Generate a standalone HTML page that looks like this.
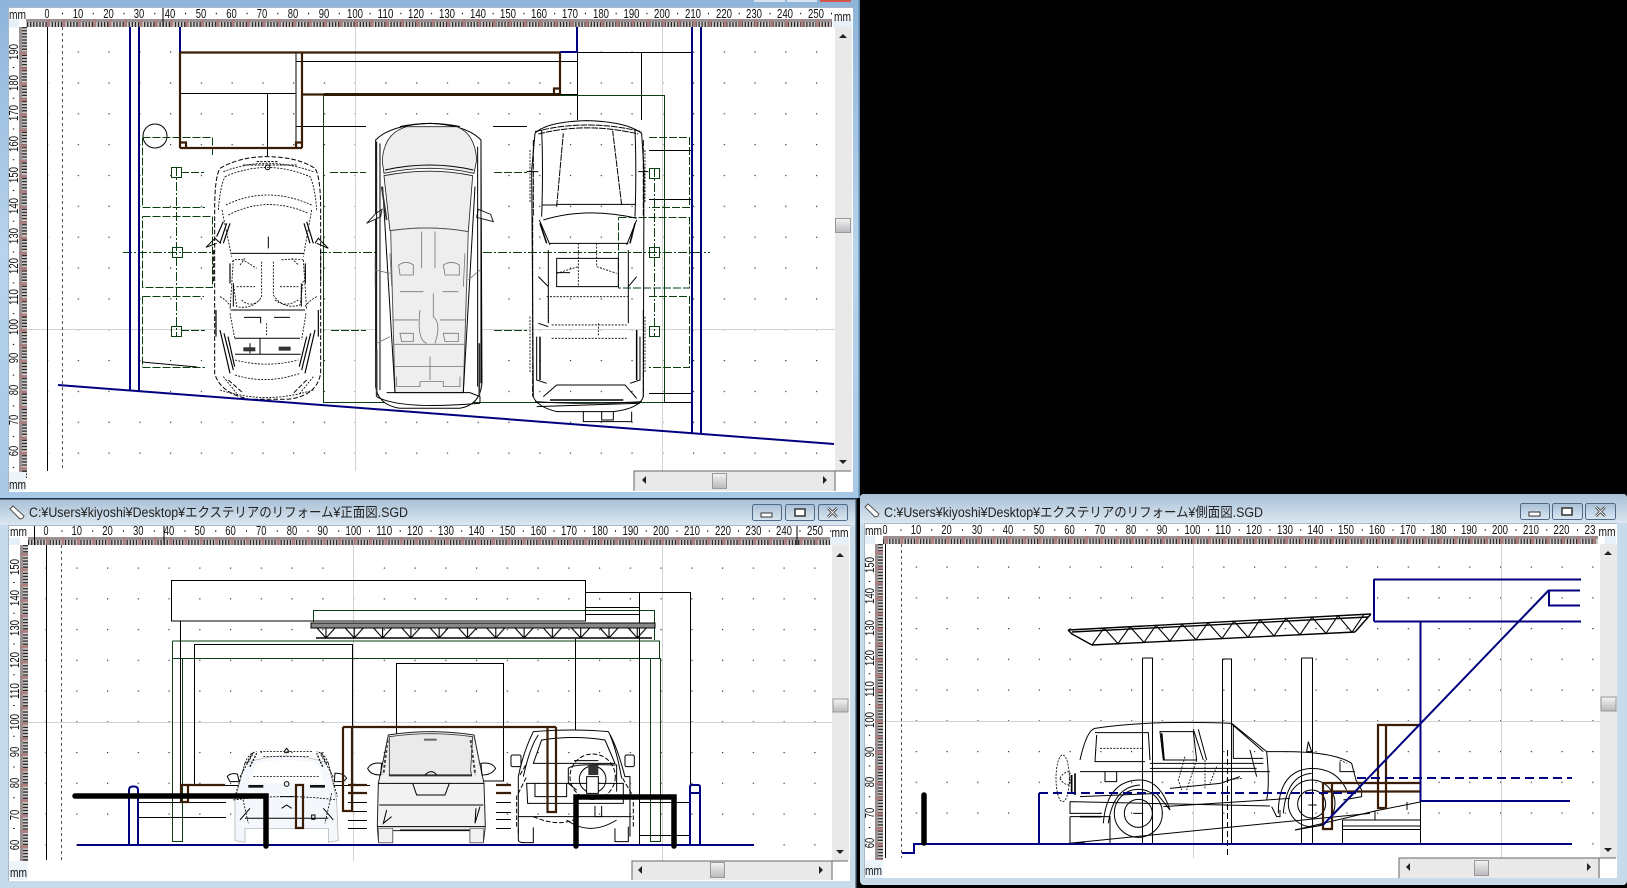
<!DOCTYPE html>
<html lang="ja"><head><meta charset="utf-8"><title>SGD</title>
<style>
html,body{margin:0;padding:0;background:#000;width:1627px;height:888px;overflow:hidden}
svg{display:block;position:absolute;left:0;top:0}
text{font-family:"Liberation Sans","Noto Sans CJK JP",sans-serif;fill:#111}
.r text{font-size:12.5px;text-anchor:middle}
.k{stroke:#000;fill:none;stroke-width:1}
.g{stroke:#0a3f12;fill:none;stroke-width:1}
.gd{stroke:#0a3f12;fill:none;stroke-width:1;stroke-dasharray:8 2}
.gdd{stroke:#0a3f12;fill:none;stroke-width:1;stroke-dasharray:9 2 2 2}
.n{stroke:#00007f;fill:none;stroke-width:2}
.b{stroke:#3b1d06;fill:none;stroke-width:2.2}
.c{stroke:#d2d2d2;fill:none;stroke-width:1}
.cr{stroke:#000;fill:none;stroke-width:3}
.cd{stroke:#000;fill:none;stroke-width:3;stroke-dasharray:14 6}
.cf{stroke:#000;fill:none;stroke-width:2.5;stroke-dasharray:6 4}
.cg{stroke:#777;fill:none;stroke-width:2.5}
.sb{fill:#e9e9e9}
</style></head><body>
<svg width="1627" height="888" viewBox="0 0 1627 888" xmlns="http://www.w3.org/2000/svg">
<defs>
<linearGradient id="tb" x1="0" y1="0" x2="0" y2="1"><stop offset="0" stop-color="#a9c0d6"/><stop offset="1" stop-color="#dbe7f1"/></linearGradient>
<linearGradient id="th" x1="0" y1="0" x2="0" y2="1"><stop offset="0" stop-color="#f4f4f4"/><stop offset="1" stop-color="#b9b9bd"/></linearGradient>
<linearGradient id="fl" x1="0" y1="0" x2="0" y2="1"><stop offset="0" stop-color="#8fb4da"/><stop offset=".5" stop-color="#b8d3ec"/><stop offset="1" stop-color="#a7c8e6"/></linearGradient>
<pattern id="d1" x="47" y="51.5" width="30.76" height="30.85" patternUnits="userSpaceOnUse"><rect width="1.2" height="1.2" fill="#333"/></pattern>
<pattern id="d2" x="45.5" y="567.5" width="30.75" height="30.75" patternUnits="userSpaceOnUse"><rect width="1.2" height="1.2" fill="#333"/></pattern>
<pattern id="d3" x="885" y="566.5" width="30.75" height="30.75" patternUnits="userSpaceOnUse"><rect width="1.2" height="1.2" fill="#333"/></pattern>
<pattern id="tr" x="316" y="628" width="28.3" height="10" patternUnits="userSpaceOnUse"><path d="M1 0L10 10M10 0V10M10 10L19 0M19 0H28" stroke="#000" stroke-width="1.1" fill="none"/></pattern>
</defs>

<rect width="1627" height="888" fill="#000"/>

<!-- WINDOW 1 -->
<rect x="0" y="0" width="860" height="498" fill="url(#fl)"/>
<rect x="754" y="0" width="31" height="2" fill="#d5e2ee"/><rect x="787" y="0" width="30" height="2" fill="#d5e2ee"/><rect x="820" y="0" width="31" height="2" fill="#d2564a"/>
<rect x="858.500" y="0" width="1.500" height="498" fill="#5f86ab"/>
<rect x="8" y="7" width="845" height="485" fill="#fff"/>
<rect x="8" y="7" width="845" height="1" fill="#a9b8c6"/><rect x="8" y="7" width="1" height="485" fill="#a9b8c6"/>
<rect x="27" y="27" width="808" height="444" fill="url(#d1)"/>
<path class="c" d="M355.500 27V471M662.500 27V471M27 329.500H835"/>
<!-- ruler W1 -->
<rect x="19" y="19" width="813" height="8" fill="#cfcaca"/><rect x="19" y="19" width="813" height="3" fill="#9a9292"/>
<path d="M27 24.500H832" stroke="#2a2a2a" stroke-width="5" stroke-dasharray="1.3 1.78" fill="none"/>
<path d="M47 23H832" stroke="#ab8080" stroke-width="8" stroke-dasharray="3 12.38" fill="none"/>
<rect x="19" y="27" width="8" height="451" fill="#cfcaca"/><rect x="19" y="27" width="3" height="451" fill="#9a9292"/>
<path d="M24.500 27V478" stroke="#2a2a2a" stroke-width="5" stroke-dasharray="1.3 1.78" fill="none"/>
<path d="M23 52V478" stroke="#ab8080" stroke-width="8" stroke-dasharray="3 12.38" fill="none"/>
<rect x="9" y="8" width="17" height="19" fill="#fff"/><rect x="9" y="19.500" width="10" height="8" fill="#e6f0f8"/>
<rect x="833" y="8" width="19" height="19" fill="#fff"/><rect x="833" y="19.500" width="19" height="8" fill="#e6f0f8"/>
<rect x="9" y="472" width="17" height="19" fill="#eef5fa"/>
<path d="M62 13.500H832M13.500 67V470" stroke="#000" stroke-width="1.400" stroke-dasharray="1 29.760" fill="none"/>
<g class="r">
<text x="17.500" y="19" textLength="17" lengthAdjust="spacingAndGlyphs">mm</text><text x="842.500" y="21" textLength="17" lengthAdjust="spacingAndGlyphs">mm</text><text x="17.500" y="489" textLength="17" lengthAdjust="spacingAndGlyphs">mm</text>
<text x="47" y="18" textLength="5" lengthAdjust="spacingAndGlyphs">0</text><text x="78" y="18" textLength="10.500" lengthAdjust="spacingAndGlyphs">10</text><text x="108.500" y="18" textLength="10.500" lengthAdjust="spacingAndGlyphs">20</text><text x="139" y="18" textLength="10.500" lengthAdjust="spacingAndGlyphs">30</text><text x="170" y="18" textLength="10.500" lengthAdjust="spacingAndGlyphs">40</text><text x="201" y="18" textLength="10.500" lengthAdjust="spacingAndGlyphs">50</text><text x="231.500" y="18" textLength="10.500" lengthAdjust="spacingAndGlyphs">60</text><text x="262" y="18" textLength="10.500" lengthAdjust="spacingAndGlyphs">70</text><text x="293" y="18" textLength="10.500" lengthAdjust="spacingAndGlyphs">80</text><text x="324" y="18" textLength="10.500" lengthAdjust="spacingAndGlyphs">90</text><text x="355" y="18" textLength="16" lengthAdjust="spacingAndGlyphs">100</text><text x="385.500" y="18" textLength="16" lengthAdjust="spacingAndGlyphs">110</text><text x="416" y="18" textLength="16" lengthAdjust="spacingAndGlyphs">120</text><text x="447" y="18" textLength="16" lengthAdjust="spacingAndGlyphs">130</text><text x="478" y="18" textLength="16" lengthAdjust="spacingAndGlyphs">140</text><text x="508" y="18" textLength="16" lengthAdjust="spacingAndGlyphs">150</text><text x="539" y="18" textLength="16" lengthAdjust="spacingAndGlyphs">160</text><text x="570" y="18" textLength="16" lengthAdjust="spacingAndGlyphs">170</text><text x="601" y="18" textLength="16" lengthAdjust="spacingAndGlyphs">180</text><text x="631.500" y="18" textLength="16" lengthAdjust="spacingAndGlyphs">190</text><text x="662" y="18" textLength="16" lengthAdjust="spacingAndGlyphs">200</text><text x="693" y="18" textLength="16" lengthAdjust="spacingAndGlyphs">210</text><text x="724" y="18" textLength="16" lengthAdjust="spacingAndGlyphs">220</text><text x="754" y="18" textLength="16" lengthAdjust="spacingAndGlyphs">230</text><text x="785" y="18" textLength="16" lengthAdjust="spacingAndGlyphs">240</text><text x="816" y="18" textLength="16" lengthAdjust="spacingAndGlyphs">250</text>
<text transform="translate(18 52) rotate(-90)" textLength="16" lengthAdjust="spacingAndGlyphs">190</text><text transform="translate(18 83) rotate(-90)" textLength="16" lengthAdjust="spacingAndGlyphs">180</text><text transform="translate(18 113) rotate(-90)" textLength="16" lengthAdjust="spacingAndGlyphs">170</text><text transform="translate(18 144) rotate(-90)" textLength="16" lengthAdjust="spacingAndGlyphs">160</text><text transform="translate(18 175) rotate(-90)" textLength="16" lengthAdjust="spacingAndGlyphs">150</text><text transform="translate(18 206) rotate(-90)" textLength="16" lengthAdjust="spacingAndGlyphs">140</text><text transform="translate(18 236) rotate(-90)" textLength="16" lengthAdjust="spacingAndGlyphs">130</text><text transform="translate(18 266) rotate(-90)" textLength="16" lengthAdjust="spacingAndGlyphs">120</text><text transform="translate(18 297) rotate(-90)" textLength="16" lengthAdjust="spacingAndGlyphs">110</text><text transform="translate(18 327) rotate(-90)" textLength="16" lengthAdjust="spacingAndGlyphs">100</text><text transform="translate(18 358) rotate(-90)" textLength="10.500" lengthAdjust="spacingAndGlyphs">90</text><text transform="translate(18 390) rotate(-90)" textLength="10.500" lengthAdjust="spacingAndGlyphs">80</text><text transform="translate(18 420) rotate(-90)" textLength="10.500" lengthAdjust="spacingAndGlyphs">70</text><text transform="translate(18 451) rotate(-90)" textLength="10.500" lengthAdjust="spacingAndGlyphs">60</text>
</g>
<path class="k" d="M163 8V27"/>
<!-- W1 scrollbars -->
<rect class="sb" x="835" y="27" width="17" height="444"/>
<path d="M839 38l4-4 4 4zM839 460l4 4 4-4z" fill="#222"/>
<rect x="835.500" y="218.500" width="15" height="14" fill="url(#th)" stroke="#999"/>
<rect class="sb" x="634" y="471" width="201" height="20"/>
<path d="M634 491V471H851M835 471V491" stroke="#666" fill="none"/>
<path d="M646 476v8l-4-4zM823 476v8l4-4z" fill="#222"/>
<rect x="712.500" y="473.500" width="14" height="15" fill="url(#th)" stroke="#999"/>
<!-- W1 drawing -->
<path class="k" d="M47.500 27V471"/>
<path stroke="#555" fill="none" stroke-dasharray="3 3" d="M62.500 27V471"/>
<path class="k" d="M296 53V148M296.500 61.500H577.500M180 93.500H296M267.500 93.500V156M296 126.500H366M577.500 52V120M577 52.500H693M641.500 52V120M560 94.500H577M493 126.500H527M649 150.500H692M649 199.500H692M649 393.500H692M664 402.500H692"/>
<circle class="k" cx="155" cy="136" r="12"/>
<path class="g" d="M323.500 95V402.500H664M323 95.500H664.500V402"/>
<path class="gd" d="M142.500 137.500H212.500V155M142.500 137.500V207.500H205M142.500 216.500H212.500V287.500H142.500V216.500M142.500 296.500H204M142.500 296.500V367M142.500 367.500H205M181 172.500H204M181 330.500H205M330 172.500H366M494 172.500H527M331 330.500H366M494 330.500H527M649 137.500H689.500V207.500H649M618.500 217.500H689.500V288H618.500V217.500M649 296.500H689.500V367.500H649"/>
<path class="gdd" d="M123 252.500H710M176.500 167V336M654.500 168V336"/>
<path class="g" d="M171.500 167.500h10v10h-10zM172.500 247.500h10v10h-10zM171.500 326.500h10v10h-10zM649.500 168.500h10v10h-10zM649.500 247.500h10v10h-10zM649.500 326.500h10v10h-10z"/>
<path class="k" d="M142 362L197 367"/>
<path class="b" d="M180 52.500H560V94M302 52V148M180 148H302M180 52V148M302 94.500H560"/>
<path class="b" d="M180.500 142.500H186V148M296 148V142.500H302M554 94V88.500H560" stroke-width="2"/>
<path d="M324 94.500H560" stroke="#2e1c00" stroke-width="3"/>

<!-- Car 1 top sports -->
<g transform="translate(200 110) scale(.3333)">
<path fill="#fff" d="M60 175Q120 140 200 140Q290 140 345 175Q362 200 362 300V790Q350 860 260 868H150Q60 850 44 790V300Q44 200 60 175Z"/>
<path class="cd" d="M60 175Q120 140 200 140Q290 140 345 175Q362 200 362 300V790Q350 860 260 868H150Q60 850 44 790V300Q44 200 60 175Z"/>
<path class="cf" d="M70 185Q200 135 340 185M75 200Q200 145 330 200Q345 230 350 300M55 300Q60 230 75 200M78 285Q200 225 335 285M85 315Q200 255 325 310M66 300L95 440M335 300L310 440M60 840Q200 885 340 840M70 800L110 850M340 800L300 850"/>
<path class="cr" stroke-width="5" d="M130 165H290M170 155H235" stroke-dasharray="7 4"/>
<circle class="cr" cx="203" cy="172" r="7"/>
<path class="cr" d="M95 430H310M92 600H315M105 733H302M180 685V733M180 685H300M105 685H180M150 730V700M205 380V415M132 622H182V640M222 622H270M100 520V590M304 520V590"/>
<path class="cf" d="M97 455Q100 445 130 450L170 475M185 455V560Q160 600 110 590L100 520M220 455V555Q250 600 300 585L310 510M310 450Q290 445 240 450M110 530H165M240 530H295M105 750Q200 775 295 750M105 795Q200 825 300 790M60 560Q80 570 92 590M350 560Q330 570 315 590M100 450L90 600M310 450L320 600M125 570Q150 595 180 570M225 570Q255 595 295 570M120 465L135 445M275 445L295 465M200 640V680M90 610L105 690M318 610L305 690"/>
<path class="cr" d="M18 412L45 385L62 400M385 415L355 385L345 400M18 412L50 400M385 415L350 400"/>
<path stroke="#000" stroke-width="3.500" fill="none" d="M50 380L70 335M60 400L80 340M70 400L90 340M340 400L320 335M330 400L312 340M48 600V680M60 660L90 790M72 670L100 780M84 680L104 770M355 600V680M345 660L315 790M332 670L305 780M320 680L298 770M90 460V520M316 460V520"/>
<rect x="130" y="712" width="36" height="12" fill="#333"/><rect x="236" y="710" width="36" height="12" fill="#333"/>
<path class="cd" d="M85 810L130 850M320 810L280 850M40 420V520M362 420V520"/>
</g>

<!-- Car 2 top minivan -->
<g transform="translate(200 110) scale(.3333)">
<path fill="#fff" stroke="#000" stroke-width="3" d="M527 90Q570 45 690 40Q800 45 843 90L846 820Q840 885 780 895H600Q535 885 527 830Z"/>
<path fill="#eee" stroke="#222" stroke-width="2.500" d="M547 155Q550 70 620 50H770Q825 70 830 150L822 190Q690 160 552 190Z"/>
<path fill="#eee" stroke="#222" stroke-width="2.500" d="M552 197Q690 170 818 197L805 365Q690 345 570 362Z"/>
<path fill="#eee" stroke="#555" stroke-width="3" d="M572 362Q690 345 805 365L790 848H585Z"/>
<path fill="#fff" stroke="#222" stroke-width="3" d="M500 340L528 310L546 298L542 320ZM835 298L872 313L880 335L830 322Z"/>
<path class="cr" d="M530 95V830M540 100V840M843 100V820M833 110V830M548 230L585 848M825 230L790 848M555 180Q690 150 820 180M560 848H810L840 860V880M530 860Q600 900 840 880M600 50Q690 30 780 50"/>
<path stroke="#333" stroke-width="5" fill="none" d="M527 440V530M530 720V860M838 700V860M545 230L560 330"/>
<path class="cg" d="M665 365V475M705 365V475M570 430L575 530M795 430L790 530M596 465Q620 450 640 465V495H600ZM730 465Q755 450 778 465V495H735ZM600 545H670M728 545H775M580 630H655M720 630H795M600 670H640V695H605ZM730 670H775V695H735ZM575 703H795M660 600Q650 690 680 700M700 550V620Q725 640 705 700M690 740V810M585 770H790M590 800V830H660V815H730V830H780V800M525 480L570 490M840 480L805 510M530 700L570 680"/>
</g>

<!-- Car 3 top SUV -->
<g transform="translate(480 110) scale(.3333)">
<path fill="#fff" class="cr" d="M165 70Q200 35 320 32Q440 35 485 70L492 180L490 860Q480 895 400 905H230Q170 890 160 860L155 180Z"/>
<path class="cr" d="M165 65Q320 25 485 65M175 72Q320 35 475 72M160 90V320M490 90V320M158 320V860M490 600V860M230 290L250 70M425 285L398 62" stroke-dasharray="20 3"/>
<path class="cr" d="M190 330Q320 290 470 325M178 330L210 405M470 330L440 405M210 400H445M230 445H415V530H230ZM230 488H270M205 420V640M445 420V640M175 500L205 530M470 500L445 530M175 640L205 650M170 680V810L200 820M480 680V810L450 820M190 860L230 825H435L470 865M165 875Q320 885 485 875M170 890L480 880M310 905V935H455V905M365 905V930H400V905M140 185H175M475 185H505M185 285H230M230 283H465M185 60Q190 180 185 320M465 60Q470 180 465 320"/>
<path stroke="#000" stroke-width="4.500" fill="none" d="M180 340L200 400M465 340L450 400M180 680V810M470 660V810M210 870H430"/>
<path class="cf" d="M200 560H445M215 645H440M215 685H440M205 560V640M295 400V530M350 400V470M230 490L295 470M350 470L410 490M355 640V680M150 120V280M495 120V280M150 620V790M495 620V790"/>
</g>

<!-- navy on top W1 -->
<path class="n" stroke-width="2.400" d="M58 385L834 444"/>
<path class="n" stroke-width="2.400" d="M130 27V390M139 27V391M692 27V433M701 27V433"/>
<path class="n" d="M180 27V52M577 27V52M560 52H578"/>

<!-- WINDOW 2 -->
<rect x="0" y="499" width="857" height="389" fill="#c8dbea"/>
<rect x="0" y="499" width="857" height="26" fill="url(#tb)"/>
<rect x="0" y="498" width="857" height="1.500" fill="#1d2f42"/>
<rect x="855.500" y="498" width="1.500" height="390" fill="#2a3b4c"/>
<rect x="8" y="525" width="842" height="356" fill="#fff"/>
<rect x="8" y="525" width="842" height="1" fill="#a9b8c6"/><rect x="8" y="525" width="1" height="356" fill="#a9b8c6"/>
<path d="M10 509l3-3 11 10-1 2-3 1z" fill="#fff" stroke="#555"/>
<text x="29" y="517" font-size="13.500" textLength="379" lengthAdjust="spacingAndGlyphs" style="fill:#222">C:¥Users¥kiyoshi¥Desktop¥エクステリアのリフォーム¥正面図.SGD</text>
<g fill="url(#tb)" stroke="#4e6a86"><rect x="752.500" y="504.500" width="29" height="16" rx="2"/><rect x="785.500" y="504.500" width="29" height="16" rx="2"/><rect x="818.500" y="504.500" width="29" height="16" rx="2"/></g>
<rect x="761" y="513" width="11" height="4" fill="#fff" stroke="#333"/><rect x="795" y="509" width="10" height="7" fill="#fff" stroke="#333" stroke-width="1.500"/>
<path d="M828 508l9 9M837 508l-9 9" stroke="#222" stroke-width="2.500"/><path d="M828 508l9 9M837 508l-9 9" stroke="#fff" stroke-width="1"/>
<rect x="28" y="545" width="804" height="316" fill="url(#d2)"/>
<path class="c" d="M353.500 545V861M662.500 545V861M28 722.500H832"/>
<rect x="20" y="537" width="817" height="8" fill="#cfcaca"/><rect x="20" y="537" width="817" height="3" fill="#9a9292"/>
<path d="M28 542.500H830" stroke="#2a2a2a" stroke-width="5" stroke-dasharray="1.3 1.78" fill="none"/>
<path d="M46 541H832" stroke="#ab8080" stroke-width="8" stroke-dasharray="3 12.38" fill="none"/>
<rect x="20" y="545" width="8" height="323" fill="#cfcaca"/><rect x="20" y="545" width="3" height="323" fill="#9a9292"/>
<path d="M25.500 545V868" stroke="#2a2a2a" stroke-width="5" stroke-dasharray="1.3 1.78" fill="none"/>
<path d="M24 553V868" stroke="#ab8080" stroke-width="8" stroke-dasharray="3 12.38" fill="none"/>
<rect x="9" y="526" width="19" height="19" fill="#fff"/><rect x="9" y="538" width="11" height="7" fill="#e6f0f8"/>
<rect x="830" y="526" width="19" height="11" fill="#fff"/><rect x="830" y="537" width="19" height="8" fill="#e6f0f8"/>
<rect x="9" y="861" width="19" height="19" fill="#eef5fa"/>
<path d="M61.500 531H832M14 582V850" stroke="#000" stroke-width="1.400" stroke-dasharray="1 29.750" fill="none"/>
<g class="r">
<text x="18.500" y="536" textLength="17" lengthAdjust="spacingAndGlyphs">mm</text><text x="840" y="537" textLength="17" lengthAdjust="spacingAndGlyphs">mm</text><text x="18.500" y="877" textLength="17" lengthAdjust="spacingAndGlyphs">mm</text>
<text x="46" y="535" textLength="5" lengthAdjust="spacingAndGlyphs">0</text><text x="76.700" y="535" textLength="10.500" lengthAdjust="spacingAndGlyphs">10</text><text x="107.500" y="535" textLength="10.500" lengthAdjust="spacingAndGlyphs">20</text><text x="138.200" y="535" textLength="10.500" lengthAdjust="spacingAndGlyphs">30</text><text x="169" y="535" textLength="10.500" lengthAdjust="spacingAndGlyphs">40</text><text x="199.700" y="535" textLength="10.500" lengthAdjust="spacingAndGlyphs">50</text><text x="230.500" y="535" textLength="10.500" lengthAdjust="spacingAndGlyphs">60</text><text x="261.200" y="535" textLength="10.500" lengthAdjust="spacingAndGlyphs">70</text><text x="292" y="535" textLength="10.500" lengthAdjust="spacingAndGlyphs">80</text><text x="322.700" y="535" textLength="10.500" lengthAdjust="spacingAndGlyphs">90</text><text x="353.500" y="535" textLength="16" lengthAdjust="spacingAndGlyphs">100</text><text x="384.200" y="535" textLength="16" lengthAdjust="spacingAndGlyphs">110</text><text x="415" y="535" textLength="16" lengthAdjust="spacingAndGlyphs">120</text><text x="446" y="535" textLength="16" lengthAdjust="spacingAndGlyphs">130</text><text x="476.500" y="535" textLength="16" lengthAdjust="spacingAndGlyphs">140</text><text x="507.500" y="535" textLength="16" lengthAdjust="spacingAndGlyphs">150</text><text x="538.500" y="535" textLength="16" lengthAdjust="spacingAndGlyphs">160</text><text x="569" y="535" textLength="16" lengthAdjust="spacingAndGlyphs">170</text><text x="600" y="535" textLength="16" lengthAdjust="spacingAndGlyphs">180</text><text x="630.500" y="535" textLength="16" lengthAdjust="spacingAndGlyphs">190</text><text x="661" y="535" textLength="16" lengthAdjust="spacingAndGlyphs">200</text><text x="692" y="535" textLength="16" lengthAdjust="spacingAndGlyphs">210</text><text x="723" y="535" textLength="16" lengthAdjust="spacingAndGlyphs">220</text><text x="753.500" y="535" textLength="16" lengthAdjust="spacingAndGlyphs">230</text><text x="784" y="535" textLength="16" lengthAdjust="spacingAndGlyphs">240</text><text x="815" y="535" textLength="16" lengthAdjust="spacingAndGlyphs">250</text>
<text transform="translate(19 567) rotate(-90)" textLength="16" lengthAdjust="spacingAndGlyphs">150</text><text transform="translate(19 598) rotate(-90)" textLength="16" lengthAdjust="spacingAndGlyphs">140</text><text transform="translate(19 628) rotate(-90)" textLength="16" lengthAdjust="spacingAndGlyphs">130</text><text transform="translate(19 660) rotate(-90)" textLength="16" lengthAdjust="spacingAndGlyphs">120</text><text transform="translate(19 691) rotate(-90)" textLength="16" lengthAdjust="spacingAndGlyphs">110</text><text transform="translate(19 722) rotate(-90)" textLength="16" lengthAdjust="spacingAndGlyphs">100</text><text transform="translate(19 752) rotate(-90)" textLength="10.500" lengthAdjust="spacingAndGlyphs">90</text><text transform="translate(19 783) rotate(-90)" textLength="10.500" lengthAdjust="spacingAndGlyphs">80</text><text transform="translate(19 815) rotate(-90)" textLength="10.500" lengthAdjust="spacingAndGlyphs">70</text><text transform="translate(19 845) rotate(-90)" textLength="10.500" lengthAdjust="spacingAndGlyphs">60</text>
</g>
<path class="k" d="M34.500 526V545M164 526V545M797 526V545"/>
<rect class="sb" x="832" y="545" width="17" height="316"/>
<path d="M836 557l4-4 4 4zM836 850l4 4 4-4z" fill="#222"/>
<rect x="833" y="699" width="15" height="13" fill="url(#th)" stroke="#999"/>
<rect class="sb" x="632" y="861" width="200" height="19"/>
<path d="M632 880V861H848M832 861V880" stroke="#666" fill="none"/>
<path d="M642 866v8l-4-4zM819 866v8l4-4z" fill="#222"/>
<rect x="710.500" y="862.500" width="14" height="15" fill="url(#th)" stroke="#999"/>
<!-- W2 drawing -->
<path class="k" d="M46.500 545V860"/>
<path stroke="#555" fill="none" stroke-dasharray="3 3" d="M61.500 545V860"/>
<path class="g" d="M313.500 622V610.500H654.500V640M172.500 641H659.500V658M172.500 641V841.500H182.500V658M172 658.500H660.500V841.500H650.500V658"/>
<path class="k" d="M171.500 580.500H585.500V621H171.500ZM180.500 621V785M194.500 785V644.500H352.500V785M396.500 781V663.500H503.500V781H396.500M575.500 639V730M639.500 592V845.500M585 592.500H690.500V785M585 607.500H640M585 614.500H640M640 802.500H690M640 835.500H690M138 802.500H226M138 817.500H226M180 785.500H370M348 802.500H367M348 811.500H367M348 820.500H367M348 828.500H367M496 802.500H511M496 812.500H511M496 819.500H511M496 828.500H511"/>
<rect x="311" y="623" width="344" height="5" fill="#888" stroke="#000"/>
<rect x="316" y="628" width="338" height="10" fill="url(#tr)"/>
<path d="M316 638H652" stroke="#000" stroke-width="1.500"/>
<!-- small front car -->
<g transform="translate(0 500) scale(.3333)">
<path fill="#f4f7fb" stroke="#aaa" stroke-width="2" d="M735 790Q860 745 985 790L1010 900L1015 1022L985 1027L985 985H735V1027L705 1022L705 900Z"/>
<path fill="#fff" d="M770 790Q860 770 950 790L975 850H745Z"/>
<path class="cf" d="M735 790Q745 760 770 755M985 790Q975 760 950 755M780 755H940M790 770H930M720 830L760 760M1000 830L960 760M735 790L705 890M985 790L1012 890M760 830H960M700 900Q860 880 1010 900M725 880L745 970M995 880L975 970"/>
<path stroke="#000" stroke-width="4" fill="none" stroke-dasharray="6 4" d="M740 790L760 755M750 800L770 760M980 790L962 755M968 800L950 760"/>
<path fill="#fff" stroke="#000" stroke-width="3" d="M682 830Q690 818 712 822L718 845H690ZM1005 820Q1030 818 1040 835L1030 845H1003Z"/>
<rect x="745" y="855" width="45" height="8" fill="#111"/><rect x="930" y="855" width="45" height="8" fill="#111"/>
<circle class="cr" cx="860" cy="852" r="7"/>
<path class="cr" d="M720 895L760 890M735 955H985M840 890H880M845 925L860 915L875 925M935 945H945V958H935ZM720 960L750 925M1000 960L970 925"/>
<path class="cd" d="M860 745L870 758H850Z"/>
</g>
<!-- center rear car -->
<g transform="translate(300 720) scale(.3333)">
<path fill="#f2f2f3" stroke="#222" stroke-width="3" d="M265 45Q390 25 522 45L535 110L552 190L556 320L550 368H510V332H278V368H236L232 320L235 190L252 110Z"/>
<path fill="#eaeaeb" stroke="#333" stroke-width="2.500" d="M268 50Q390 32 518 50L512 150L515 168H268Z"/>
<path class="cr" d="M235 190H552M338 190L350 225H435L448 190M238 255H550M233 320H555M300 330H510M260 270L250 310L275 290M528 265L525 310L540 260M375 165Q395 145 410 165M268 165H515"/>
<path class="cr" fill="#fff" d="M203 145Q215 125 245 130L242 165Q210 165 203 145ZM543 130Q575 125 587 145Q575 165 546 165Z"/>
<path stroke="#444" stroke-width="6" fill="none" stroke-dasharray="9 6" d="M263 60L250 165M512 60L526 165"/>
<rect x="372" y="56" width="38" height="6" fill="#666"/>
<rect x="236" y="325" width="42" height="43" fill="#f2f2f3" stroke="#555" stroke-width="2"/><rect x="510" y="325" width="40" height="43" fill="#f2f2f3" stroke="#555" stroke-width="2"/>
</g>
<!-- right rear SUV -->
<g transform="translate(300 720) scale(.3333)">
<path class="cr" d="M700 35Q820 25 925 35Q950 75 975 170H990V350M700 35Q670 95 655 170V340M715 45Q690 80 670 170M930 45Q950 90 965 175M725 60Q820 45 915 60L945 130H700ZM683 250H970V190H680ZM705 190H800V230H705ZM655 290H995M800 300Q870 350 950 300"/>
<path class="cd" d="M650 320V230L680 170M1000 320V230L965 170M660 165L680 130M700 290Q770 320 820 300"/>
<rect x="633" y="105" width="30" height="35" rx="5" fill="#fff" stroke="#000" stroke-width="3"/>
<rect x="975" y="105" width="28" height="35" rx="5" fill="#fff" stroke="#000" stroke-width="3"/>
<circle class="cd" cx="878" cy="170" r="68"/><circle class="cr" cx="878" cy="178" r="40"/>
<path fill="#333" d="M865 135h30v30h-30z"/><path fill="#fff" stroke="#000" stroke-width="3" d="M860 170h35v50h-35z"/>
<path class="cr" stroke-width="7" d="M822 122H895"/>
<path class="cr" d="M805 145Q815 130 950 135V215M805 145V190L830 210M885 258V290H905V258"/>
<path class="cr" d="M655 325V360Q655 368 675 368H700V322M945 325V365H985V320"/>
</g>
<!-- brown W2 -->
<path class="b" d="M343 727H556M343 727V811H352V727M547.500 727V812H556V727M181 785H188V802H181ZM188 785H225M296 785H303V828H296Z"/>
<path class="b" d="M348 785H367M496 785H511"/>
<path class="b" stroke-width="3" d="M348 793H367M496 793H511"/>
<!-- navy W2 -->
<path class="n" d="M77 845H754"/>
<path class="n" d="M129 845V790Q129 786.500 133 786.500H134Q138 786.500 138 790V845M690 845V787Q690 785 692 785H698Q700 785 700 787V845M690 793H700"/>
<path stroke="#000" stroke-width="5.500" stroke-linecap="round" fill="none" d="M75 796H266V846M576 846V797H674V846"/>

<!-- WINDOW 3 -->
<rect x="860" y="494" width="767" height="391" rx="4" fill="#c8dbea"/>
<path d="M860 523V498Q860 494 864 494H1623Q1627 494 1627 498V523Z" fill="url(#tb)"/>
<rect x="864" y="523" width="753" height="355" fill="#fff"/>
<rect x="864" y="523" width="753" height="1" fill="#a9b8c6"/><rect x="864" y="523" width="1" height="355" fill="#a9b8c6"/>
<path d="M865 507l3-3 11 10-1 2-3 1z" fill="#fff" stroke="#555"/>
<text x="884" y="517" font-size="13.500" textLength="379" lengthAdjust="spacingAndGlyphs" style="fill:#222">C:¥Users¥kiyoshi¥Desktop¥エクステリアのリフォーム¥側面図.SGD</text>
<g fill="url(#tb)" stroke="#4e6a86"><rect x="1520.500" y="503.500" width="29" height="16" rx="2"/><rect x="1552.500" y="503.500" width="30" height="16" rx="2"/><rect x="1585.500" y="503.500" width="30" height="16" rx="2"/></g>
<rect x="1529" y="512" width="11" height="4" fill="#fff" stroke="#333"/><rect x="1562" y="508" width="10" height="7" fill="#fff" stroke="#333" stroke-width="1.500"/>
<path d="M1596 507l9 9M1605 507l-9 9" stroke="#222" stroke-width="2.500"/><path d="M1596 507l9 9M1605 507l-9 9" stroke="#fff" stroke-width="1"/>
<rect x="883" y="544" width="717" height="314" fill="url(#d3)"/>
<path class="c" d="M1193.500 544V858M1501.500 544V858M883 721.500H1600"/>
<rect x="875" y="536" width="730" height="8" fill="#cfcaca"/><rect x="875" y="536" width="730" height="3" fill="#9a9292"/>
<path d="M883 541.500H1596" stroke="#2a2a2a" stroke-width="5" stroke-dasharray="1.3 1.78" fill="none"/>
<path d="M885 540H1600" stroke="#ab8080" stroke-width="8" stroke-dasharray="3 12.38" fill="none"/>
<rect x="875" y="544" width="8" height="321" fill="#cfcaca"/><rect x="875" y="544" width="3" height="321" fill="#9a9292"/>
<path d="M880.500 544V865" stroke="#2a2a2a" stroke-width="5" stroke-dasharray="1.3 1.78" fill="none"/>
<path d="M879 551V865" stroke="#ab8080" stroke-width="8" stroke-dasharray="3 12.38" fill="none"/>
<rect x="865" y="524" width="18" height="20" fill="#fff"/><rect x="865" y="536" width="10" height="8" fill="#e6f0f8"/>
<rect x="1598" y="524" width="18" height="20" fill="#fff"/><rect x="1605" y="536" width="11" height="8" fill="#e6f0f8"/>
<rect x="865" y="860" width="18" height="18" fill="#eef5fa"/>
<path d="M900.500 530H1597M869.500 581V850" stroke="#000" stroke-width="1.400" stroke-dasharray="1 29.750" fill="none"/>
<g class="r">
<text x="873.500" y="535" textLength="17" lengthAdjust="spacingAndGlyphs">mm</text><text x="1607" y="536" textLength="17" lengthAdjust="spacingAndGlyphs">mm</text><text x="873.500" y="875" textLength="17" lengthAdjust="spacingAndGlyphs">mm</text>
<text x="885" y="534" textLength="5" lengthAdjust="spacingAndGlyphs">0</text><text x="916" y="534" textLength="10.500" lengthAdjust="spacingAndGlyphs">10</text><text x="946.500" y="534" textLength="10.500" lengthAdjust="spacingAndGlyphs">20</text><text x="977" y="534" textLength="10.500" lengthAdjust="spacingAndGlyphs">30</text><text x="1008" y="534" textLength="10.500" lengthAdjust="spacingAndGlyphs">40</text><text x="1039" y="534" textLength="10.500" lengthAdjust="spacingAndGlyphs">50</text><text x="1069.500" y="534" textLength="10.500" lengthAdjust="spacingAndGlyphs">60</text><text x="1100" y="534" textLength="10.500" lengthAdjust="spacingAndGlyphs">70</text><text x="1131" y="534" textLength="10.500" lengthAdjust="spacingAndGlyphs">80</text><text x="1162" y="534" textLength="10.500" lengthAdjust="spacingAndGlyphs">90</text><text x="1192.500" y="534" textLength="16" lengthAdjust="spacingAndGlyphs">100</text><text x="1223" y="534" textLength="16" lengthAdjust="spacingAndGlyphs">110</text><text x="1254" y="534" textLength="16" lengthAdjust="spacingAndGlyphs">120</text><text x="1285" y="534" textLength="16" lengthAdjust="spacingAndGlyphs">130</text><text x="1315.500" y="534" textLength="16" lengthAdjust="spacingAndGlyphs">140</text><text x="1346" y="534" textLength="16" lengthAdjust="spacingAndGlyphs">150</text><text x="1377" y="534" textLength="16" lengthAdjust="spacingAndGlyphs">160</text><text x="1408" y="534" textLength="16" lengthAdjust="spacingAndGlyphs">170</text><text x="1438.500" y="534" textLength="16" lengthAdjust="spacingAndGlyphs">180</text><text x="1469" y="534" textLength="16" lengthAdjust="spacingAndGlyphs">190</text><text x="1500" y="534" textLength="16" lengthAdjust="spacingAndGlyphs">200</text><text x="1531" y="534" textLength="16" lengthAdjust="spacingAndGlyphs">210</text><text x="1561.500" y="534" textLength="16" lengthAdjust="spacingAndGlyphs">220</text><text x="1590" y="534" textLength="11" lengthAdjust="spacingAndGlyphs">23</text>
<text transform="translate(874 565) rotate(-90)" textLength="16" lengthAdjust="spacingAndGlyphs">150</text><text transform="translate(874 596) rotate(-90)" textLength="16" lengthAdjust="spacingAndGlyphs">140</text><text transform="translate(874 628) rotate(-90)" textLength="16" lengthAdjust="spacingAndGlyphs">130</text><text transform="translate(874 658) rotate(-90)" textLength="16" lengthAdjust="spacingAndGlyphs">120</text><text transform="translate(874 689) rotate(-90)" textLength="16" lengthAdjust="spacingAndGlyphs">110</text><text transform="translate(874 720) rotate(-90)" textLength="16" lengthAdjust="spacingAndGlyphs">100</text><text transform="translate(874 752) rotate(-90)" textLength="10.500" lengthAdjust="spacingAndGlyphs">90</text><text transform="translate(874 782) rotate(-90)" textLength="10.500" lengthAdjust="spacingAndGlyphs">80</text><text transform="translate(874 813) rotate(-90)" textLength="10.500" lengthAdjust="spacingAndGlyphs">70</text><text transform="translate(874 843) rotate(-90)" textLength="10.500" lengthAdjust="spacingAndGlyphs">60</text>
</g>
<rect class="sb" x="1600" y="544" width="17" height="314"/>
<path d="M1604 555l4-4 4 4zM1604 848l4 4 4-4z" fill="#222"/>
<rect x="1601" y="697" width="15" height="14" fill="url(#th)" stroke="#999"/>
<rect class="sb" x="1399" y="858" width="201" height="20"/>
<path d="M1399 878V858H1616M1599 858V878" stroke="#666" fill="none"/>
<path d="M1410 863v8l-4-4zM1587 863v8l4-4z" fill="#222"/>
<rect x="1474.500" y="860.500" width="14" height="15" fill="url(#th)" stroke="#999"/>
<!-- W3 drawing -->
<path class="k" d="M885.500 544V858"/>
<path stroke="#555" fill="none" stroke-dasharray="3 3" d="M901.500 544V858"/>
<!-- truss W3 -->
<path fill="none" stroke="#000" stroke-width="1.400" d="M1068 630L1371 614M1072 632L1368 617M1092 645L1355 632M1068 630L1072 634L1092 645M1371 614L1355 632"/>
<path fill="none" stroke="#000" stroke-width="1.100" d="M1092 644.900L1104 628L1118 643.600L1130 626.700L1144 642.400L1156 625.300L1170 641.100L1182 624L1196 639.800L1208 622.600L1222 638.500L1234 621.200L1248 637.300L1260 619.800L1274 636L1286 618.400L1300 634.700L1312 617.100L1326 633.400L1338 615.700L1352 632.200L1364 614.300"/>
<!-- SUV side -->
<g transform="translate(1050 700) scale(.3333)">
<ellipse class="cf" cx="38" cy="235" rx="20" ry="70"/>
<path class="cf" d="M30 235Q40 215 60 215V255Q40 255 30 235Z"/>
<path class="cr" d="M90 180Q110 90 135 85Q300 60 545 70L650 155L700 155Q850 155 905 190L918 240L935 270V290L880 300M545 72L640 155M135 98H295L300 180M140 105L135 185H285M330 95H430L440 180H340ZM445 88L470 180M430 88L460 180M90 215H660M165 215H200V245H165ZM60 305V340H155M60 340H110M60 305L660 318M340 320L650 300L720 295M360 265L510 250L570 230M90 290L330 280M320 280L360 330M650 155Q660 250 650 300M550 72V175H640M600 150L620 230M300 190H640M300 205H620"/>
<path class="cr" d="M775 125L770 155H785ZM870 190V215H915"/>
<path class="cf" d="M150 145H275M405 170L385 240L395 270M440 180L410 270M465 180V265M500 200L480 250M530 240L575 235M870 210V180L890 190"/>
<path stroke="#000" stroke-width="5" fill="none" d="M335 100L342 180M65 225V280M75 220V285"/>
<circle class="cr" cx="265" cy="340" r="72"/><circle class="cr" cx="265" cy="340" r="42"/>
<circle class="cr" cx="785" cy="310" r="70"/><circle class="cr" cx="785" cy="312" r="42"/>
<path class="cr" d="M160 370Q170 240 270 240Q330 240 360 330M685 340Q685 210 785 205Q860 205 890 270M175 370Q190 260 270 255M700 340Q710 225 785 220M250 340H280M775 315H800"/>
<path class="cr" d="M60 350H180V430M60 350V430M55 430L960 340M735 390L820 375M665 320L680 350H690V330"/>
<path stroke="#000" stroke-width="5" d="M60 430H105M90 350H155"/>
</g>
<path class="k" d="M1142.500 658H1152.500V844M1142.500 658V844M1222.500 659H1231.500V844M1222.500 659V844M1301.500 658H1312.500V844M1301.500 658V844M1342.500 820V844M1420.500 801V844M1342.500 820H1420M1342 829.500H1420M1342 826H1420M1295 830L1375 811L1420 802M1375 811V820M1407 802V810"/>
<path stroke="#000" stroke-dasharray="6 3" d="M1227.500 750V858"/>
<path class="b" d="M1420 725H1378V808H1386V725M1323 783H1332V829H1323ZM1323 783H1420M1323 791.500H1420"/>
<path class="n" d="M902 853H914V844H1572M1039 844V793M1420.500 621V801H1570M1374 579.500H1581M1374 579V621.500M1374 621.500H1581M1549 590.500H1580M1549 590V605.500H1580M1323 825L1549 590"/>
<path class="n" stroke-dasharray="9 5" d="M1039 793H1360M1357 778H1572"/>
<path stroke="#000" stroke-width="5.500" stroke-linecap="round" d="M924 795V843"/>
</svg>
</body></html>
